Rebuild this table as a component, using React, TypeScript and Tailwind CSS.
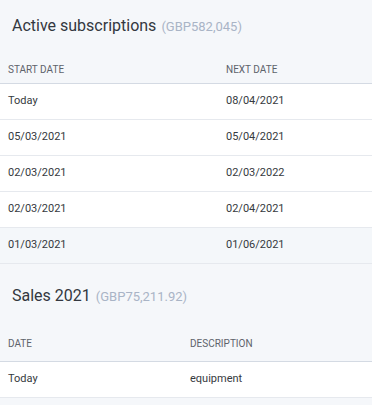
const subscriptions = [
  { start: 'Today', next: '08/04/2021' },
  { start: '05/03/2021', next: '05/04/2021' },
  { start: '02/03/2021', next: '02/03/2022' },
  { start: '02/03/2021', next: '02/04/2021' },
  { start: '01/03/2021', next: '01/06/2021', hover: true },
];

const sales = [{ date: 'Today', description: 'equipment' }];

function Title({ label, amount }: { label: string; amount: string }) {
  return (
    <div className="flex items-baseline gap-[5px] pl-3">
      <span className="text-[16px] leading-5 text-[#333740]">{label}</span>
      <span className="text-[13px] text-[#a9b4c6]">{amount}</span>
    </div>
  );
}

function HeaderRow({ cols, split, offset }: { cols: [string, string]; split: string; offset?: boolean }) {
  return (
    <div
      className={`flex h-[36px] items-center border-b border-[#d4dae3] text-[10px] uppercase text-[#5e636b] ${
        offset ? 'pt-[8px]' : ''
      }`}
    >
      <div className={`${split} pl-2`}>{cols[0]}</div>
      <div className="flex-1 pl-2">{cols[1]}</div>
    </div>
  );
}

export default function App() {
  return (
    <div
      className="h-[405px] w-[372px] overflow-hidden bg-[#f5f7fa]"
      style={{ fontFamily: 'Roboto, "Liberation Sans", sans-serif' }}
    >
      {/* Active subscriptions */}
      <div className="flex h-[48px] items-center pt-[4px]">
        <Title label="Active subscriptions" amount="(GBP582,045)" />
      </div>
      <HeaderRow cols={['Start date', 'Next date']} split="w-[218px]" offset />
      {subscriptions.map((r, i) => (
        <div
          key={i}
          className={`flex h-[36px] items-center border-b border-[#e6e9ee] text-[11px] text-[#363a40] ${
            r.hover ? 'bg-[#f4f7fa]' : 'bg-white'
          }`}
        >
          <div className="w-[218px] pl-2">{r.start}</div>
          <div className="flex-1 pl-2">{r.next}</div>
        </div>
      ))}

      {/* Sales */}
      <div className="flex h-[62px] items-center pt-[2px]">
        <Title label="Sales 2021" amount="(GBP75,211.92)" />
      </div>
      <HeaderRow cols={['Date', 'Description']} split="w-[182px]" />
      {sales.map((r, i) => (
        <div
          key={i}
          className="flex h-[36px] items-center border-b border-[#e6e9ee] bg-white text-[11px] text-[#363a40]"
        >
          <div className="w-[182px] pl-2">{r.date}</div>
          <div className="flex-1 pl-2">{r.description}</div>
        </div>
      ))}
    </div>
  );
}
